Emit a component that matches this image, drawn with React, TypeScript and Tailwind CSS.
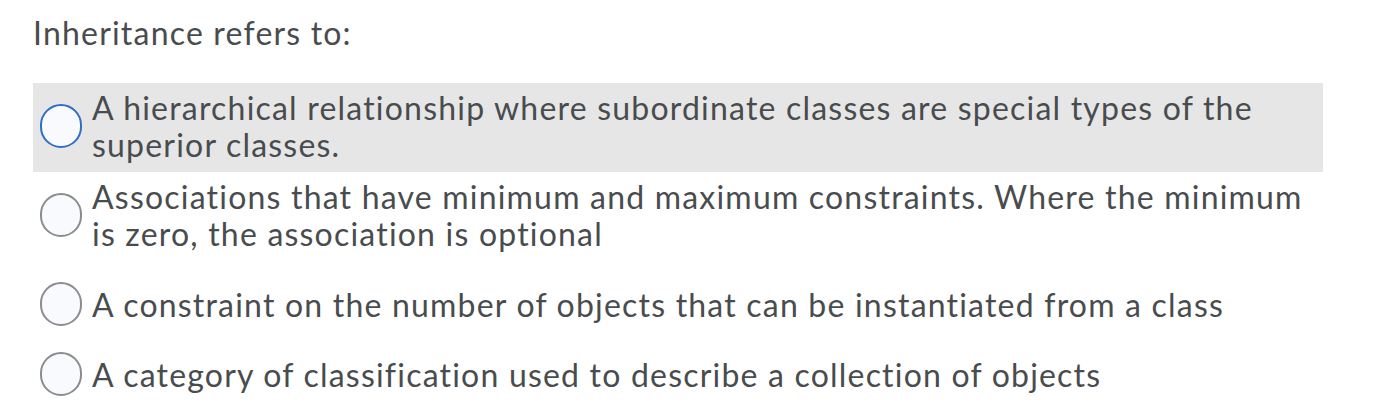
const options = [
  {
    text: "A hierarchical relationship where subordinate classes are special types of the superior classes.",
    focused: true,
    gap: "",
  },
  {
    text: "Associations that have minimum and maximum constraints. Where the minimum is zero, the association is optional",
    focused: false,
    gap: "",
  },
  {
    text: "A constraint on the number of objects that can be instantiated from a class",
    focused: false,
    gap: "mt-[15px]",
  },
  {
    text: "A category of classification used to describe a collection of objects",
    focused: false,
    gap: "mt-[11px]",
  },
]

export default function App() {
  return (
    <div
      className="w-[1380px] h-[420px] bg-white pl-[33px] pt-[14px] text-[#494c4e] [font-variant-ligatures:none]"
      style={{ fontFamily: "Lato, 'Open Sans', sans-serif" }}
    >
      <h1 className="text-[32px] leading-[37px] tracking-[1.2px] font-normal">Inheritance refers to:</h1>

      <div className="w-[1290px] mt-[32px] flex flex-col">
        {options.map((opt, i) => (
          <label
            key={i}
            className={
              "flex items-center pl-[7px] pt-[6px] pb-[9px] " +
              (opt.focused ? "bg-[#e6e6e6] " : "") +
              opt.gap
            }
          >
            <span
              className={
                "w-[42px] h-[44px] rounded-full bg-[#f9fafd] shrink-0 border-2 " +
                (opt.focused ? "border-[#2f6fc4]" : "border-[#8b8c8d]")
              }
            />
            <span className="ml-[10px] text-[32px] leading-[37px] tracking-[1.2px]">{opt.text}</span>
          </label>
        ))}
      </div>
    </div>
  )
}
